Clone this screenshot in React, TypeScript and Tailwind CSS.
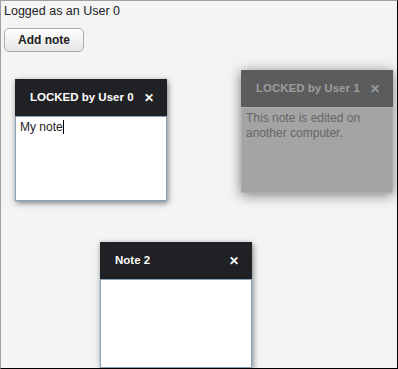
import React from "react";

type NoteProps = {
  title: string;
  className: string;
  locked?: boolean;
  children?: React.ReactNode;
};

function Note({ title, className, locked, children }: NoteProps) {
  return (
    <div
      className={`absolute w-[152px] flex flex-col ${className} ${
        locked
          ? "shadow-[0_2px_12px_rgba(0,0,0,0.5)]"
          : "shadow-[1px_2px_6px_rgba(0,0,0,0.5)]"
      }`}
    >
      <div
        className={`h-[37px] flex items-center justify-between pl-[15px] pr-[13px] pt-[1px] text-[11.5px] font-bold ${
          locked ? "bg-[#5b5c5d] text-[#9c9c9c]" : "bg-[#1f2124] text-white"
        }`}
      >
        <span>{title}</span>
        <span className="text-[12px] leading-none">✕</span>
      </div>
      <div
        className={`flex-1 px-[4px] py-[3px] text-[12px] leading-[15px] border ${
          locked
            ? "bg-[#a4a4a4] border-[#afafaf] text-[#666]"
            : "bg-white border-[#8aa2b8] text-[#222]"
        }`}
      >
        {children}
      </div>
    </div>
  );
}

export default function App() {
  return (
    <div
      className="relative w-[398px] h-[369px] bg-[#f4f4f4] border-l border-t border-[#a0a0a0] border-r border-b border-r-black border-b-black overflow-hidden"
      style={{ fontFamily: '"Liberation Sans", Arial, sans-serif' }}
    >
      <div className="pl-[3px] pt-[3px] text-[12.5px] text-[#222] leading-[15px]">
        Logged as an User 0
      </div>
      <button className="ml-[3px] mt-[9px] w-[80px] h-[24px] rounded-[5px] border border-[#aaa] bg-gradient-to-b from-white to-[#e6e6e6] text-[12px] font-bold text-[#222]">
        Add note
      </button>

      <Note title="LOCKED by User 0" className="left-[14px] top-[78px] h-[122px]">
        <span>
          My note<span className="inline-block w-px h-[14px] bg-black align-[-3px]" />
        </span>
      </Note>

      <Note title="Note 2" className="left-[99px] top-[241px] h-[126px]" />

      <Note
        title="LOCKED by User 1"
        locked
        className="left-[240px] top-[69px] h-[123px]"
      >
        This note is edited on another computer.
      </Note>
    </div>
  );
}
